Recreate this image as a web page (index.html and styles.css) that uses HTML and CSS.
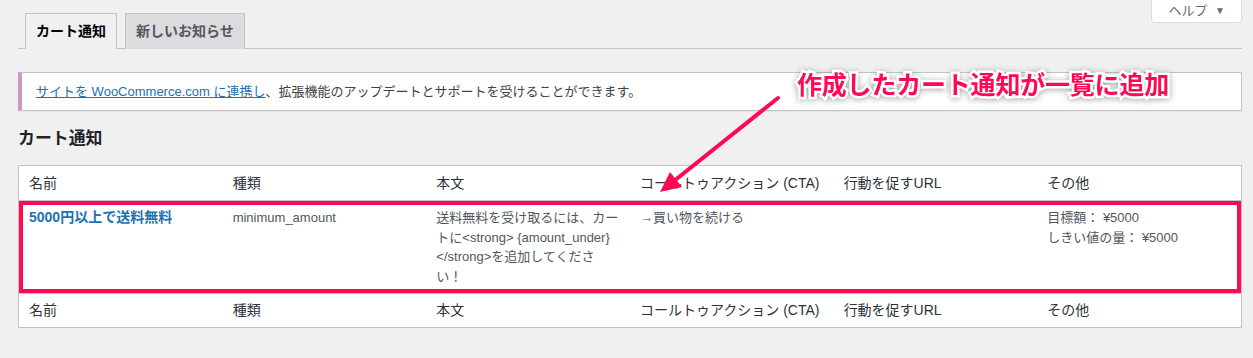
FILE: index.html
```html
<!DOCTYPE html>
<html lang="ja">

<head>
  <meta charset="UTF-8" />
  <meta name="viewport" content="width=device-width, initial-scale=1.0" />
  <title>カート通知</title>
  <link rel="stylesheet" href="styles.css">
</head>

<body>
  <div class="wrap">
    <div class="topbar">
      <nav class="tabs">
        <a class="tab activo" href="#">カート通知</a>
        <a class="tab" href="#">新しいお知らせ</a>
      </nav>
      <button class="ayuda">ヘルプ <span class="flecha">▼</span></button>
    </div>

    <div class="aviso">
      <p><a href="#">サイトを WooCommerce.com に連携し</a>、拡張機能のアップデートとサポートを受けることができます。</p>
    </div>

    <h2 class="titulo">カート通知</h2>

    <table class="lista">
      <thead>
        <tr>
          <th>名前</th>
          <th>種類</th>
          <th>本文</th>
          <th>コールトゥアクション (CTA)</th>
          <th>行動を促すURL</th>
          <th>その他</th>
        </tr>
      </thead>
      <tbody>
        <tr class="marcado">
          <td><a class="nombre" href="#">5000円以上で送料無料</a></td>
          <td>minimum_amount</td>
          <td>送料無料を受け取るには、カートに&lt;strong&gt; {amount_under}&lt;/strong&gt;を追加してください！</td>
          <td>→買い物を続ける</td>
          <td></td>
          <td>目標額： ¥5000<br>しきい値の量： ¥5000</td>
        </tr>
      </tbody>
      <tfoot>
        <tr>
          <th>名前</th>
          <th>種類</th>
          <th>本文</th>
          <th>コールトゥアクション (CTA)</th>
          <th>行動を促すURL</th>
          <th>その他</th>
        </tr>
      </tfoot>
    </table>
  </div>

  <!-- anotacion sobre la captura -->
  <div class="nota">
    <span class="nota-texto">作成したカート通知が一覧に追加</span>
    <svg class="nota-flecha" width="1253" height="358" viewBox="0 0 1253 358">
      <line x1="778" y1="98" x2="674" y2="181" stroke="#ff0a52" stroke-width="4" stroke-linecap="round" />
      <polygon points="660,192 682,187 670,172" fill="#ff0a52" />
    </svg>
  </div>
</body>

</html>
```

FILE: styles.css
```css
body {
  margin: 0;
  background: #f0f0f1;
  font-family: "Liberation Sans", "Noto Sans CJK JP", sans-serif;
  font-size: 13px;
  color: #3c434a;
}

.wrap {
  padding: 0 11px 0 18px;
}

.topbar {
  display: flex;
  justify-content: space-between;
  align-items: flex-start;
  border-bottom: 1px solid #c3c4c7;
  height: 48px;
}

.tabs {
  display: flex;
  gap: 8px;
  padding: 13px 0 0 7px;
  align-self: flex-end;
  margin-bottom: -1px;
}

.tab {
  display: block;
  padding: 5px 10px;
  font-size: 14px;
  line-height: 24px;
  font-weight: bold;
  text-decoration: none;
  color: #50575e;
  background: #dcdcde;
  border: 1px solid #c3c4c7;
  border-bottom: none;
}

.tab.activo {
  background: #f0f0f1;
  color: #000;
  border-bottom: 1px solid #f0f0f1;
}

.ayuda {
  height: 23px;
  padding: 0 16px 2px;
  font-family: inherit;
  font-size: 13px;
  line-height: 19px;
  color: #646970;
  background: #fff;
  border: 1px solid #dcdcde;
  border-top: none;
  border-radius: 0 0 4px 4px;
  cursor: pointer;
}

.flecha {
  font-size: 10px;
  margin-left: 4px;
  vertical-align: 1px;
}

.aviso {
  margin-top: 23px;
  background: #fff;
  border: 1px solid #c3c4c7;
  border-left: 4px solid #cc99c2;
  padding: 1px 12px;
  box-shadow: 0 1px 1px rgba(0, 0, 0, 0.04);
}

.aviso p {
  margin: 5.5px 0;
  padding: 2px;
  line-height: 19.5px;
}

.aviso a {
  color: #2271b1;
}

.titulo {
  font-size: 16.9px;
  line-height: 22px;
  font-weight: bold;
  color: #1d2327;
  margin: 17px 0 15px;
}

.lista {
  width: 100%;
  table-layout: fixed;
  border-collapse: separate;
  border-spacing: 0;
  background: #fff;
  border: 1px solid #c3c4c7;
  box-shadow: 0 1px 1px rgba(0, 0, 0, 0.04);
}

.lista th {
  text-align: left;
  font-weight: normal;
  font-size: 14px;
  line-height: 19.6px;
  padding: 8px 10px 7px;
  color: #2c3338;
}

.lista thead th {
  border-bottom: 1px solid #c3c4c7;
}

.lista tfoot th {
  border-top: 1px solid #c3c4c7;
  padding: 7px 10px 6px;
}

.lista td {
  vertical-align: top;
  padding: 7px 10px;
  line-height: 19.5px;
  color: #50575e;
  word-break: break-all;
}

.nombre {
  font-size: 14px;
  font-weight: bold;
  color: #2271b1;
  text-decoration: none;
}

/* recuadro rojo de la captura */
.marcado td {
  box-shadow: inset 0 4px 0 #ff0a52, inset 0 -4px 0 #ff0a52;
}

.marcado td:first-child {
  box-shadow: inset 4px 4px 0 #ff0a52, inset 0 -4px 0 #ff0a52;
}

.marcado td:last-child {
  box-shadow: inset -4px 4px 0 #ff0a52, inset 0 -4px 0 #ff0a52;
}

.nota {
  position: absolute;
  top: 0;
  left: 0;
  width: 1253px;
  height: 358px;
  pointer-events: none;
}

.nota-flecha {
  position: absolute;
  top: 0;
  left: 0;
}

.nota-texto {
  position: absolute;
  left: 797px;
  top: 70px;
  font-family: "Noto Sans CJK JP", sans-serif;
  font-size: 25px;
  line-height: 27px;
  font-weight: bold;
  letter-spacing: -0.2px;
  color: #ff0a52;
  -webkit-text-stroke: 5px #fff;
  paint-order: stroke fill;
  filter: drop-shadow(0 1px 3px rgba(0, 0, 0, 0.35));
  white-space: nowrap;
}
```
